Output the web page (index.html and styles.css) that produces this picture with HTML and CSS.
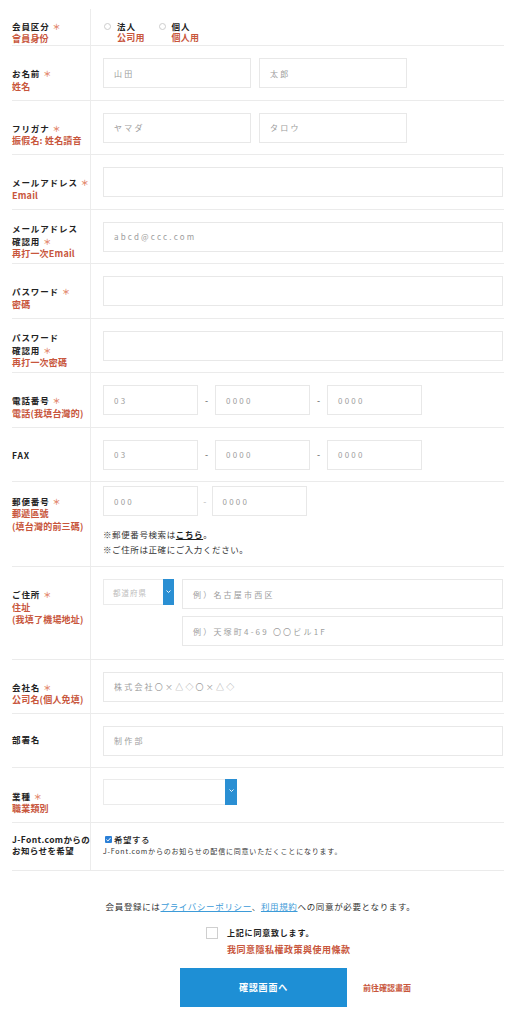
FILE: index.html
```html
<!DOCTYPE html>
<html lang="ja">
<head>
<meta charset="utf-8">
<title>会員登録</title>
<link rel="stylesheet" href="styles.css">
</head>
<body>
<div class="form">
  <div class="row row-top">
    <div class="label"><p class="jp">会員区分<span class="req">＊</span></p><p class="zh">會員身份</p></div>
    <div class="value">
      <div class="radios">
        <div class="radio"><span class="circle"></span><div><p class="jp">法人</p><p class="zh">公司用</p></div></div>
        <div class="radio"><span class="circle"></span><div><p class="jp">個人</p><p class="zh">個人用</p></div></div>
      </div>
    </div>
  </div>

  <div class="row">
    <div class="label"><p class="jp">お名前<span class="req">＊</span></p><p class="zh">姓名</p></div>
    <div class="value"><div class="pair"><div class="field half">山田</div><div class="field half">太郎</div></div></div>
  </div>

  <div class="row">
    <div class="label"><p class="jp">フリガナ<span class="req">＊</span></p><p class="zh">振假名: 姓名讀音</p></div>
    <div class="value"><div class="pair"><div class="field half">ヤマダ</div><div class="field half">タロウ</div></div></div>
  </div>

  <div class="row">
    <div class="label"><p class="jp">メールアドレス<span class="req">＊</span></p><p class="zh">Email</p></div>
    <div class="value"><div class="field"></div></div>
  </div>

  <div class="row">
    <div class="label tight"><p class="jp">メールアドレス</p><p class="jp">確認用<span class="req">＊</span></p><p class="zh">再打一次Email</p></div>
    <div class="value"><div class="field">abcd@ccc.com</div></div>
  </div>

  <div class="row">
    <div class="label"><p class="jp">パスワード<span class="req">＊</span></p><p class="zh">密碼</p></div>
    <div class="value"><div class="field"></div></div>
  </div>

  <div class="row">
    <div class="label tight"><p class="jp">パスワード</p><p class="jp">確認用<span class="req">＊</span></p><p class="zh">再打一次密碼</p></div>
    <div class="value"><div class="field"></div></div>
  </div>

  <div class="row">
    <div class="label"><p class="jp">電話番号<span class="req">＊</span></p><p class="zh">電話(我填台灣的)</p></div>
    <div class="value">
      <div class="tel"><div class="field">03</div><span class="dash">-</span><div class="field">0000</div><span class="dash">-</span><div class="field">0000</div></div>
    </div>
  </div>

  <div class="row">
    <div class="label"><p class="jp">FAX</p></div>
    <div class="value">
      <div class="tel"><div class="field">03</div><span class="dash">-</span><div class="field">0000</div><span class="dash">-</span><div class="field">0000</div></div>
    </div>
  </div>

  <div class="row row-zip">
    <div class="label tight"><p class="jp">郵便番号<span class="req">＊</span></p><p class="zh">郵遞區號</p><p class="zh">(填台灣的前三碼)</p></div>
    <div class="value">
      <div class="tel zip"><div class="field">000</div><span class="dash">-</span><div class="field">0000</div></div>
      <div class="notes">
        <p>※郵便番号検索は<a class="here">こちら</a>。</p>
        <p>※ご住所は正確にご入力ください。</p>
      </div>
    </div>
  </div>

  <div class="row row-addr">
    <div class="label"><p class="jp">ご住所<span class="req">＊</span></p><p class="zh">住址</p><p class="zh">(我填了機場地址)</p></div>
    <div class="value">
      <div class="addr">
        <div class="select pref">
          <span class="stext">都道府県</span>
          <span class="arrow"><svg width="5" height="3" viewBox="0 0 5 3"><polyline points="0.5,0.5 2.5,2.5 4.5,0.5" fill="none" stroke="#fff" stroke-width="0.9"/></svg></span>
        </div>
        <div class="addr-col">
          <div class="field">例）名古屋市西区</div>
          <div class="field">例）天塚町4-69 〇〇ビル1F</div>
        </div>
      </div>
    </div>
  </div>

  <div class="row row-54">
    <div class="label"><p class="jp">会社名<span class="req">＊</span></p><p class="zh">公司名(個人免填)</p></div>
    <div class="value"><div class="field">株式会社〇×△◇〇×△◇</div></div>
  </div>

  <div class="row row-54">
    <div class="label single"><p class="jp">部署名</p></div>
    <div class="value"><div class="field">制作部</div></div>
  </div>

  <div class="row row-ind">
    <div class="label"><p class="jp">業種<span class="req">＊</span></p><p class="zh">職業類別</p></div>
    <div class="value">
      <div class="select ind">
        <span class="stext"></span>
        <span class="arrow"><svg width="5" height="3" viewBox="0 0 5 3"><polyline points="0.5,0.5 2.5,2.5 4.5,0.5" fill="none" stroke="#fff" stroke-width="0.9"/></svg></span>
      </div>
    </div>
  </div>

  <div class="row row-news">
    <div class="label"><p class="jp">J-Font.comからの</p><p class="jp">お知らせを希望</p></div>
    <div class="value">
      <div class="check"><span class="cbox"><svg width="7" height="7" viewBox="0 0 7 7"><polyline points="1.4,3.6 2.9,5 5.6,1.9" fill="none" stroke="#fff" stroke-width="1"/></svg></span><span>希望する</span></div>
      <p class="news-note">J-Font.comからのお知らせの配信に同意いただくことになります。</p>
    </div>
  </div>
</div>

<p class="terms">会員登録には<a class="link">プライバシーポリシー</a>、<a class="link">利用規約</a>への同意が必要となります。</p>

<div class="agree">
  <div class="agree-inner">
    <span class="abox"></span>
    <div class="agree-text">
      <p class="jp">上記に同意致します。</p>
      <p class="zh">我同意隱私權政策與使用條款</p>
    </div>
  </div>
</div>

<div class="submit">
  <div class="btn">確認画面へ</div>
  <p class="zh btn-note">前往確認畫面</p>
</div>
</body>
</html>
```

FILE: styles.css
```css
* { box-sizing: border-box; margin: 0; padding: 0; }
html, body { background: #fff; }
body {
  width: 521px;
  font-family: "Noto Sans CJK JP", "Noto Sans", sans-serif;
  color: #222;
}

.form { width: 492px; margin: 9px 0 0 12px; }

.row { display: flex; border-bottom: 1px solid #ebebeb; }

.label {
  flex: none;
  width: 79px;
  border-right: 1px solid #ececec;
  padding-top: 21px;
  line-height: 12.5px;
  white-space: nowrap;
}
.label.tight { padding-top: 12.5px; }
.label.single { padding-top: 19.5px; }

.jp { font-size: 8.5px; font-weight: 700; letter-spacing: 0.9px; color: #222; }
.zh {
  font-family: "Noto Sans CJK TC", "Noto Sans CJK JP", sans-serif;
  font-size: 9px;
  font-weight: 700;
  letter-spacing: 0.2px;
  color: #c8563c;
}
.req { font-size: 8px; color: #e3886e; margin-left: 3px; letter-spacing: 0; }

.value { flex: 1; min-width: 0; padding: 12px 1px 11.5px 12px; }

.field {
  height: 30px;
  border: 1px solid #e8e8e8;
  padding-left: 10px;
  display: flex;
  align-items: center;
  font-size: 8px;
  letter-spacing: 2.2px;
  color: #9d9d9d;
  white-space: nowrap;
}

.pair { display: flex; gap: 8px; }
.pair .half { width: 148px; }

.tel { display: flex; align-items: center; }
.tel .field { width: 95px; }
.dash { width: 17px; text-align: center; font-size: 9px; color: #555; }
.zip .dash { width: 13.5px; color: #bbb; }

/* first row */
.row-top .label { padding-top: 11px; line-height: 12px; }
.row-top .value { padding: 11px 1px 0 12px; line-height: 12px; }
.radios { display: flex; gap: 14px; padding-left: 1px; }
.radio { display: flex; gap: 6px; }
.circle {
  flex: none;
  width: 7px;
  height: 7px;
  margin-top: 2.5px;
  border: 1px solid #cdcdcd;
  border-radius: 50%;
}

/* postal */
.row-zip .value { padding-top: 4px; padding-bottom: 9px; }
.notes { margin-top: 11px; font-size: 8.5px; line-height: 15px; letter-spacing: 0.6px; color: #333; }
.here { font-weight: 700; color: #222; text-decoration: underline; }

/* address */
.row-addr .value { padding-bottom: 12.5px; }
.addr { display: flex; gap: 8px; align-items: flex-start; }
.addr-col { flex: 1; display: flex; flex-direction: column; gap: 7px; }

.select { display: flex; height: 26px; }
.select .stext {
  flex: 1;
  display: flex;
  align-items: center;
  padding-left: 9px;
  border: 1px solid #ebebeb;
  border-right: none;
  font-size: 7.5px;
  letter-spacing: 1px;
  color: #bdbdbd;
}
.select .arrow {
  flex: none;
  width: 11px;
  background: #2a8fd3;
  display: flex;
  align-items: center;
  justify-content: center;
  padding-bottom: 2px;
}
.select .arrow svg { display: block; }
.pref { width: 71px; flex: none; }
.ind { width: 134px; }
.ind .arrow { width: 12px; }

.row-54 .value { padding-bottom: 11px; }
.row-ind .label { padding-top: 22px; }
.row-ind .value { padding: 11px 1px 17px 12px; }

/* newsletter */
.row-news .label { padding-top: 11px; line-height: 11.5px; }
.row-news .label .jp { letter-spacing: 0.4px; }
.row-news .value { padding: 11px 1px 12.5px 12px; }
.check {
  display: flex;
  align-items: center;
  gap: 2px;
  font-size: 8.5px;
  font-weight: 500;
  line-height: 11.5px;
  letter-spacing: 0.5px;
  color: #222;
}
.cbox {
  flex: none;
  width: 7px;
  height: 7px;
  margin-left: 2px;
  background: #2b7fd6;
  border-radius: 1px;
}
.cbox svg { display: block; }
.news-note { font-size: 7px; line-height: 12px; letter-spacing: 0.8px; color: #333; white-space: nowrap; }

/* bottom */
.terms {
  margin-top: 29.5px;
  text-align: center;
  font-size: 8.5px;
  line-height: 13px;
  letter-spacing: 0.65px;
  color: #333;
}
.link { color: #3d9bd8; text-decoration: underline; }

.agree { display: flex; justify-content: center; margin-top: 13.5px; }
.agree-inner { display: flex; gap: 9px; }
.abox { flex: none; width: 12px; height: 12px; border: 1px solid #cfcfcf; }
.agree-text { width: 88px; line-height: 12px; }
.agree-text .jp { font-size: 8px; letter-spacing: 0.8px; white-space: nowrap; }
.agree-text .zh { margin-top: 4px; line-height: 13px; letter-spacing: 0.5px; white-space: nowrap; }

.submit {
  display: grid;
  grid-template-columns: 1fr 167px 1fr;
  align-items: center;
  padding-left: 6px;
  margin-top: 12.5px;
}
.btn {
  grid-column: 2;
  height: 39px;
  background: #1e8fd5;
  color: #fff;
  display: flex;
  align-items: center;
  justify-content: center;
  font-size: 9px;
  font-weight: 700;
  letter-spacing: 0.8px;
}
.btn-note { padding-left: 16px; font-size: 8px; letter-spacing: 0; }
```
